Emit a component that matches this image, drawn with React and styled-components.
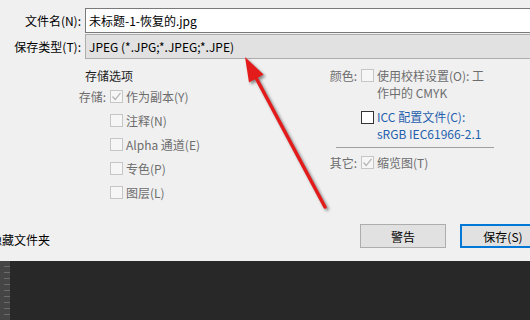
import React from 'react';
import styled, { createGlobalStyle } from 'styled-components';

const GlobalStyle = createGlobalStyle`
    html, body {
        margin: 0;
        padding: 0;
        background: #282828;
    }
    * {
        box-sizing: border-box;
    }
`;

const Screen = styled.div`
    width: 530px;
    height: 320px;
    display: flex;
    flex-direction: column;
    overflow: hidden;
    font-family: 'Noto Sans CJK SC', 'Noto Sans', sans-serif;
    font-size: 12px;
    color: #000;
`;

const Dialog = styled.div`
    position: relative;
    height: 261px;
    flex-shrink: 0;
    background: #f0f0f0;
    display: flex;
    flex-direction: column;
    padding-top: 8px;
    overflow: hidden;
`;

const FieldRow = styled.div`
    display: grid;
    grid-template-columns: 85px 460px;
    align-items: center;
    margin-top: ${props => props.$gap || 0}px;
`;

const FieldLabel = styled.label`
    text-align: right;
    padding-right: 4px;
    white-space: nowrap;
    line-height: 17px;
`;

const TextBox = styled.div`
    height: 25px;
    background: #fff;
    border: 1px solid #7a7a7a;
    border-right: none;
    padding-left: 3px;
    display: flex;
    align-items: center;
    white-space: nowrap;
`;

const ComboBox = styled(TextBox)`
    background: #e1e1e1;
    border-color: #adadad;
`;

const Options = styled.div`
    display: flex;
    margin-top: 8px;
`;

const Column = styled.div`
    width: ${props => props.$width}px;
    flex-shrink: 0;
    display: flex;
    flex-direction: column;
`;

const Heading = styled.div`
    padding-left: 85px;
    line-height: 17px;
    color: #1e1e1e;
`;

const OptionRow = styled.div`
    display: grid;
    grid-template-columns: ${props => props.$label}px 1fr;
    align-items: ${props => (props.$top ? 'start' : 'center')};
    height: ${props => (props.$height ? `${props.$height}px` : 'auto')};
    margin-top: ${props => props.$gap || 0}px;
`;

const RowLabel = styled.span`
    text-align: right;
    padding-right: 4px;
    line-height: 17px;
    color: #6d6d6d;
    white-space: nowrap;
`;

const CheckItem = styled.div`
    display: flex;
    align-items: ${props => (props.$top ? 'flex-start' : 'center')};
    gap: 3px;
`;

const Box = styled.span`
    width: 13px;
    height: 13px;
    flex-shrink: 0;
    margin-top: ${props => props.$offset || 0}px;
    border: 1px solid ${props => (props.$disabled ? '#c6c6c6' : '#333')};
    background: ${props => (props.$disabled ? '#f6f6f6' : '#fff')};
    display: flex;
    align-items: center;
    justify-content: center;
`;

const ItemText = styled.span`
    line-height: 17px;
    white-space: nowrap;
    color: ${props => (props.$link ? '#1f5fae' : '#6d6d6d')};
`;

const Divider = styled.div`
    height: 1px;
    width: 158px;
    margin: 5px 0 0 71px;
    background: #a0a0a0;
`;

const Footer = styled.div`
    display: flex;
    align-items: center;
    margin-top: auto;
    margin-bottom: 13px;
`;

const FolderToggle = styled.span`
    width: 370px;
    flex-shrink: 0;
    margin-left: -10px;
    padding-top: 6px;
    white-space: nowrap;
`;

const Button = styled.button`
    width: 86px;
    height: 24px;
    flex-shrink: 0;
    margin-right: 14px;
    font: inherit;
    color: #000;
    background: #e1e1e1;
    border: ${props => (props.$primary ? '2px solid #0078d7' : '1px solid #adadad')};
    padding: 0;
`;

const Workspace = styled.div`
    flex: 1;
    display: flex;
    background: #282828;
`;

const Ruler = styled.div`
    width: 10px;
    background-color: #454545;
    background-image: repeating-linear-gradient(
        to bottom,
        transparent 0px,
        transparent 5px,
        #6a6a6a 5px,
        #6a6a6a 6px
    );
    background-size: 6px 100%;
    background-repeat: no-repeat;
    background-position: right top;
`;

const ArrowLayer = styled.svg`
    position: absolute;
    left: 0;
    top: 0;
    width: 530px;
    height: 261px;
    pointer-events: none;
    filter: drop-shadow(2px 2px 1.5px rgba(0, 0, 0, 0.45));
`;

const Check = () => (
    <svg width="11" height="11" viewBox="0 0 11 11">
        <polyline points="1.5,5.5 4.2,8.5 9.5,1.8" fill="none" stroke="#b4b4b4" strokeWidth="1.2" />
    </svg>
);

const storeItems = [
    { text: '作为副本(Y)', checked: true, label: '存储:' },
    { text: '注释(N)' },
    { text: 'Alpha 通道(E)' },
    { text: '专色(P)' },
    { text: '图层(L)' },
];

const App = () => {
    return (
        <>
            <GlobalStyle />
            <Screen>
                <Dialog>
                    <FieldRow>
                        <FieldLabel>文件名(N):</FieldLabel>
                        <TextBox>未标题-1-恢复的.jpg</TextBox>
                    </FieldRow>
                    <FieldRow $gap={1}>
                        <FieldLabel>保存类型(T):</FieldLabel>
                        <ComboBox>JPEG (*.JPG;*.JPEG;*.JPE)</ComboBox>
                    </FieldRow>

                    <Options>
                        <Column $width={265}>
                            <Heading>存储选项</Heading>
                            {storeItems.map(item => (
                                <OptionRow key={item.text} $label={110} $height={24}>
                                    <RowLabel>{item.label}</RowLabel>
                                    <CheckItem>
                                        <Box $disabled>{item.checked && <Check />}</Box>
                                        <ItemText>{item.text}</ItemText>
                                    </CheckItem>
                                </OptionRow>
                            ))}
                        </Column>

                        <Column $width={265}>
                            <OptionRow $label={96} $top>
                                <RowLabel>颜色:</RowLabel>
                                <CheckItem $top>
                                    <Box $disabled $offset={2} />
                                    <ItemText>
                                        使用校样设置(O):&nbsp;工<br />作中的 CMYK
                                    </ItemText>
                                </CheckItem>
                            </OptionRow>
                            <OptionRow $label={96} $top $gap={7}>
                                <RowLabel />
                                <CheckItem $top>
                                    <Box $offset={3} />
                                    <ItemText $link>
                                        ICC 配置文件(C):<br />sRGB IEC61966-2.1
                                    </ItemText>
                                </CheckItem>
                            </OptionRow>
                            <Divider />
                            <OptionRow $label={96} $gap={6}>
                                <RowLabel>其它:</RowLabel>
                                <CheckItem>
                                    <Box $disabled><Check /></Box>
                                    <ItemText>缩览图(T)</ItemText>
                                </CheckItem>
                            </OptionRow>
                        </Column>
                    </Options>

                    <Footer>
                        <FolderToggle>隐藏文件夹</FolderToggle>
                        <Button>警告</Button>
                        <Button $primary>保存(S)</Button>
                    </Footer>

                    <ArrowLayer viewBox="0 0 530 261">
                        <line x1="325" y1="207" x2="254" y2="74" stroke="#e41b1b" strokeWidth="3.5" strokeLinecap="round" />
                        <polygon points="245,57 263.5,74.5 249,82.5" fill="#e41b1b" />
                    </ArrowLayer>
                </Dialog>
                <Workspace>
                    <Ruler />
                </Workspace>
            </Screen>
        </>
    );
};

export default App;
